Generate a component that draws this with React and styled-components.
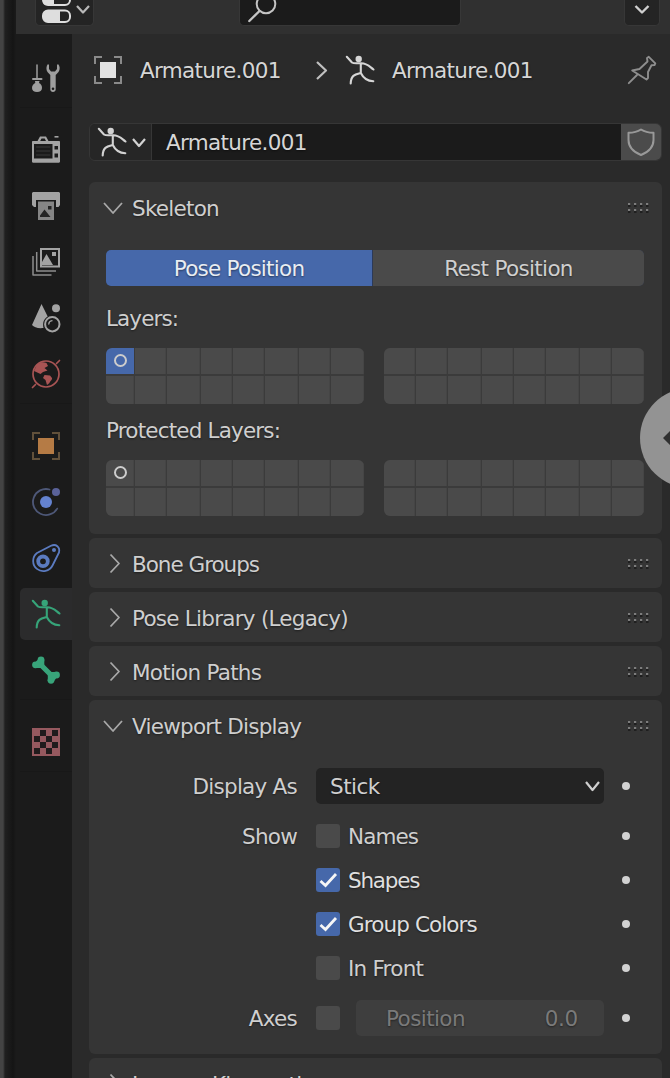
import React from "react";
import styled, { createGlobalStyle } from "styled-components";

const GlobalStyle = createGlobalStyle`
  *, *::before, *::after { box-sizing: border-box; }
  html, body { margin: 0; height: 100%; overflow: hidden; background: #2a2a2a; }
  #root { height: 100%; }
`;

const Editor = styled.div`
  position: relative;
  display: flex;
  width: 670px;
  height: 1078px;
  overflow: hidden;
  background: #2a2a2a;
  color: #cfcfcf;
  font-family: "DejaVu Sans", "Liberation Sans", sans-serif;
  font-size: 21.5px;
  letter-spacing: -0.75px;
  line-height: 26px;
  text-shadow: 0 1px 2px rgba(0, 0, 0, 0.45);
  white-space: nowrap;
`;

const AreaEdge = styled.div`
  flex: 0 0 16px;
  background: linear-gradient(90deg, #444444 0 3px, #202020 5px, #151515 13px, #1b1b1b 16px);
`;

const Area = styled.div`
  flex: 1;
  min-width: 0;
  display: flex;
  flex-direction: column;
`;

const Header = styled.header`
  flex: 0 0 34px;
  display: flex;
  align-items: flex-start;
  padding: 0 10px 0 19px;
  background: #303030;
`;

const HeaderButton = styled.button`
  display: flex;
  align-items: flex-start;
  justify-content: center;
  width: ${(p) => p.$width}px;
  height: 26px;
  margin: 0;
  padding: 0;
  border: 1px solid #373737;
  border-top: 0;
  border-radius: 0 0 5px 5px;
  background: #242424;
`;

const SearchField = styled.div`
  width: 222px;
  height: 26px;
  margin: 0 163px 0 145px;
  padding-left: 8px;
  border: 1px solid #373737;
  border-top: 0;
  border-radius: 0 0 5px 5px;
  background: #1b1b1b;
`;

const Body = styled.div`
  flex: 1;
  min-height: 0;
  display: flex;
`;

const TabBar = styled.nav`
  flex: 0 0 56px;
  display: flex;
  flex-direction: column;
  gap: 14px;
  padding: 16px 0 0 4px;
  background: #1b1b1b;
`;

const TabGroup = styled.div`
  padding-bottom: 1px;
  border-bottom: 1px solid #181818;
`;

const Tab = styled.div`
  display: flex;
  align-items: center;
  height: 52px;
  margin: 2px 0;
  & + & { margin-top: 4px; }
  padding-left: 12px;
  border-radius: 5px 0 0 5px;
  background: ${(p) => (p.$active ? "#2b2b2c" : "transparent")};
  color: ${(p) => p.$color};
`;

const Icon = styled.svg`
  display: block;
  flex: none;
  overflow: visible;
  fill: none;
  stroke: currentColor;
  stroke-width: ${(p) => p.$stroke ?? 2};
  stroke-linecap: round;
  stroke-linejoin: round;
`;

const Content = styled.main`
  flex: 1;
  min-width: 0;
  padding: 0 8px 0 17px;
`;

const Breadcrumb = styled.div`
  display: flex;
  align-items: center;
  height: 72px;
  padding: 0 6px 0 5px;
`;

const Text = styled.span`
  padding-top: 2px;
  letter-spacing: ${(p) => p.$tracking ?? -0.75}px;
`;

const Crumb = styled.div`
  display: flex;
  align-items: center;
  gap: 18px;
  width: ${(p) => p.$width}px;
  color: #d6d6d6;
`;

const CrumbArrow = styled.div`
  width: 30px;
  color: #c0c0c0;
`;

const PinSlot = styled.div`
  margin-left: auto;
  color: #8e8e8e;
`;

const DataBlock = styled.div`
  display: flex;
  height: 38px;
  margin: 17px 0 21px;
  border: 1px solid #363636;
  border-radius: 6px;
  overflow: hidden;
`;

const DataType = styled.div`
  display: flex;
  align-items: center;
  gap: 6px;
  width: 62px;
  padding-left: 8px;
  border-right: 1px solid #363636;
  background: #262626;
  color: #d2d2d2;
`;

const DataName = styled.div`
  flex: 1;
  display: flex;
  align-items: center;
  padding-left: 14px;
  background: #1b1b1b;
  color: #d6d6d6;
`;

const FakeUser = styled.div`
  display: flex;
  align-items: center;
  justify-content: center;
  width: 40px;
  background: #4b4b4b;
  color: #999999;
`;

const PanelStack = styled.div`
  display: flex;
  flex-direction: column;
  gap: 4px;
`;

const Panel = styled.section`
  height: ${(p) => p.$height}px;
  border-radius: 6px;
  background: #353535;
`;

const PanelHeader = styled.div`
  display: flex;
  align-items: center;
  height: 50px;
  padding: 2px 11.500px 0 14px;
`;

const PanelArrow = styled.div`
  display: flex;
  width: 29px;
  color: #a8a8a8;
`;

const PanelTitle = styled.h2`
  flex: 1;
  display: flex;
  margin: 0;
  font-size: inherit;
  font-weight: 400;
`;

const SkeletonBody = styled.div`
  padding: 18px 18px 0 17px;
`;

const Segmented = styled.div`
  display: grid;
  grid-template-columns: 266px 271px;
  gap: 1px;
  height: 36px;
  border-radius: 5px;
  overflow: hidden;
  background: #2c3a59;
`;

const Segment = styled.div`
  display: flex;
  align-items: center;
  justify-content: center;
  background: ${(p) => (p.$active ? "#4668aa" : "#4a4a4a")};
  color: ${(p) => (p.$active ? "#e9edf2" : "#cfcfcf")};
`;

const LayersLabel = styled.div`
  height: 26px;
  margin: ${(p) => p.$top}px 0 16px;
`;

const LayerBlocks = styled.div`
  display: flex;
  gap: 20px;
`;

const LayerGrid = styled.div`
  display: grid;
  grid-template-columns: ${(p) => p.$columns};
  grid-template-rows: 26px 28px;
  gap: 2px 1px;
  height: 56px;
  border-radius: 6px;
  overflow: hidden;
  background: #3b3b3b;
`;

const LayerCell = styled.div`
  display: flex;
  justify-content: center;
  padding-top: 6px;
  border-right: 1px solid ${(p) => (p.$active ? "#4668aa" : "#454545")};
  background: ${(p) => (p.$active ? "#4668aa" : "#4a4a4a")};
`;

const LayerRing = styled.span`
  width: 13px;
  height: 13px;
  margin-left: 1px;
  border: 2.500px solid #cccccc;
  border-radius: 50%;
`;

const DisplayBody = styled.div`
  display: flex;
  flex-direction: column;
  padding-top: 18px;
`;

const PropertyRow = styled.div`
  display: flex;
  align-items: center;
  height: ${(p) => p.$height}px;
`;

const PropertyLabel = styled.div`
  display: flex;
  justify-content: flex-end;
  width: 208px;
  margin-right: 19px;
`;

const PropertyValue = styled.div`
  display: flex;
  align-items: center;
  width: 288px;
`;

const Select = styled.div`
  flex: 1;
  display: flex;
  align-items: center;
  justify-content: space-between;
  height: 36px;
  padding: 0 4px 0 14px;
  border-radius: 5px;
  background: #232323;
`;

const Checkbox = styled.span`
  display: flex;
  align-items: center;
  justify-content: center;
  width: 24px;
  height: 24px;
  margin-right: ${(p) => p.$gap ?? 8}px;
  border-radius: 3px;
  background: ${(p) => (p.$checked ? "#4668aa" : "#4a4a4a")};
  color: #f6f6f6;
`;

const CheckLabel = styled(Text)`
  color: ${(p) => (p.$checked ? "#dfdfdf" : "#cfcfcf")};
`;

const NumberField = styled.div`
  flex: 1;
  display: flex;
  align-items: center;
  justify-content: space-between;
  height: 36px;
  padding: 0 26px 0 30px;
  border-radius: 5px;
  background: #3e3e3e;
  color: #7a7a7a;
`;

const AnimateDot = styled.span`
  width: 8px;
  height: 8px;
  margin-left: 18px;
  border-radius: 50%;
  background: #d2d2d2;
`;

const PreviousButton = styled.div`
  position: absolute;
  left: 640px;
  top: 388px;
  display: flex;
  align-items: center;
  width: 100px;
  height: 100px;
  padding-left: 23px;
  border-radius: 50%;
  background: #939393;
  color: #303030;
`;

const Chevron = ({ dir = "down", w = 14, h = 8, stroke = 2.2 }) => (
  <Icon width={w} height={h} viewBox={`0 0 ${w} ${h}`} $stroke={stroke}>
    <path
      strokeLinecap="butt"
      d={
        dir === "down"
          ? `M1 1 L${w / 2} ${h - 1} L${w - 1} 1`
          : `M1 1 L${w - 1} ${h / 2} L1 ${h - 1}`
      }
    />
  </Icon>
);

const Glyph = ({ children, stroke }) => (
  <Icon width="28" height="28" viewBox="0 0 28 28" $stroke={stroke}>
    {children}
  </Icon>
);

const ToolIcon = () => (
  <Glyph>
    <path d="M5 1V14" strokeWidth="1.5" />
    <path d="M1 15H9.5" strokeWidth="2" />
    <path d="M3 17H7.5L7 19C9 20 10 21.500 10 24C10 26.500 8 28 5 28C2 28 0 26.500 0 24C0 21.500 1.500 20 3.300 19Z" fill="currentColor" stroke="none" />
    <path d="M16 0C14 2 14 6 15.500 8L18.300 11V25.500C18.300 27 19.500 28 21 28C22.500 28 23.700 27 23.700 25.500V11L26.500 8C28.300 5.500 28 2 26 0L25 1V5L23 7.500H19L17 5V1Z M21 23.500A1.300 1.300 0 1 0 21 26.100A1.300 1.300 0 1 0 21 23.500Z" fill="currentColor" fillRule="evenodd" stroke="none" />
  </Glyph>
);

const RenderIcon = () => (
  <Glyph>
    <path fill="currentColor" fillRule="evenodd" stroke="none" d="M1 5H5.500L8 .5H14L16.500 5H27C27.700 5 28 5.500 28 6V25.500C28 26.200 27.500 26.700 27 26.700H1C.4 26.700 0 26.200 0 25.500V6C0 5.400.4 5 1 5ZM9.500 2.500L8.200 5H14L12.700 2.500ZM2 8V22.500H20.500V8ZM22.500 10V13.500H26V10ZM22.500 17.500V21.500H26V17.500Z" />
    <path strokeWidth="1" stroke="#3b3b3b" d="M4.500 11H18M4.500 15H18M4.500 19H18" />
    <path strokeWidth="1.600" strokeLinecap="butt" d="M22.500 .8H26.500" />
  </Glyph>
);

const OutputIcon = () => (
  <Glyph>
    <path fill="currentColor" stroke="none" d="M1 0H27L28 1V13L26.500 15H24V8H4V15H2L0 13V1Z" />
    <path fill="#858585" stroke="none" d="M6 9.500H22V28H6Z" />
    <path fill="#242424" stroke="none" d="M8 25V23.500L12.500 17.500L18.500 25ZM16 14H19.500V17.500H16Z" />
  </Glyph>
);

const ViewLayerIcon = () => (
  <Glyph>
    <path strokeLinejoin="miter" d="M9 1H27V18.500H9Z" />
    <path strokeLinecap="butt" strokeWidth="1.500" stroke="#8d8d8d" d="M4.700 4V23H24M1 8V27H19.500" />
    <path fill="currentColor" stroke="none" d="M10 17V14L14.500 6L21 17ZM20 4H24V8H20Z" />
  </Glyph>
);

const SceneIcon = () => (
  <Glyph>
    <path fill="currentColor" stroke="none" d="M9.500 0L15.700 12.500C11.500 15 10.500 19 11.500 24C6 24.500 2 23.500 0 21Z" />
    <circle cx="24" cy="4.200" r="4" fill="currentColor" stroke="none" />
    <circle cx="20.300" cy="20.200" r="7.200" />
    <path strokeWidth="1.300" d="M16.800 20A3.600 3.600 0 0 1 20 16.700" />
  </Glyph>
);

const WorldIcon = () => (
  <Glyph>
    <circle cx="14" cy="14" r="13" strokeWidth="1.700" />
    <path strokeWidth="1.700" d="M.5 27.500L3.500 24.500M24.500 3.500L27.500 .5" />
    <path fill="currentColor" stroke="none" d="M5 4.500C9 1.500 12 2 14.500 3L16 6L12.500 8L15.500 10.500L11 12L8.500 14L2 11ZM12.500 15L18 15.500L20 18C20.500 20 18 21 17.500 23L15 25L13.500 20L11 18Z" />
  </Glyph>
);

const ObjectIcon = ({ corner, fill }) => (
  <Glyph>
    <path stroke={corner} strokeWidth="2" strokeLinecap="butt" strokeLinejoin="miter" d="M1 8V1H8M20 1H27V8M27 20V27H20M8 27H1V20" />
    <path fill={fill} stroke="none" d="M6 6H22V22H6Z" />
  </Glyph>
);

const PhysicsIcon = () => (
  <Glyph>
    <circle cx="14" cy="14" r="6" fill="currentColor" stroke="none" />
    <circle cx="24" cy="4" r="4" fill="#5a6299" stroke="none" />
    <path stroke="#4e5878" strokeWidth="1.800" d="M17.500 1.500A13 13 0 1 0 25.200 20.600" />
  </Glyph>
);

const ConstraintIcon = () => (
  <Glyph>
    <path strokeWidth="1.800" d="M5 9L19 1.700C24 -.5 28.300 3 27 8.500L20.500 21.500A10.200 10.200 0 1 1 5 9Z" />
    <circle cx="11" cy="17.300" r="4.800" strokeWidth="3.800" />
    <circle cx="22" cy="6" r="2" fill="currentColor" stroke="none" />
  </Glyph>
);

const ArmatureIcon = () => (
  <Glyph stroke={2.1}>
    <circle cx="12.700" cy="3" r="3.200" fill="currentColor" stroke="none" />
    <path d="M.8.8L6 6.500C8 8 12 7 15 7.200C21 7 23.500 10.500 27.500 13.500M14.800 7.500V17M4.700 27.500C5 19 9 18.500 14.800 17C17.500 22.500 21.500 25 27.300 25.300" />
  </Glyph>
);

const BoneIcon = () => (
  <Glyph>
    <path strokeWidth="5.200" d="M8.500 8.500L19.500 19.500" />
    <g fill="currentColor" stroke="none">
      <circle cx="9" cy="3.800" r="3.400" />
      <circle cx="3.500" cy="8.800" r="3.400" />
      <circle cx="19" cy="24.300" r="3.400" />
      <circle cx="24.500" cy="19" r="3.400" />
      <path d="M6 3.500H12.300V12H4V5.500ZM15.800 16H24V22.500L22 25H15.800Z" />
    </g>
  </Glyph>
);

const TextureIcon = () => (
  <Glyph>
    <path fill="currentColor" stroke="none" d="M0 0H28V28H0Z" />
    <path fill="#211b1c" stroke="none" d="M8 2H14V8H8ZM20 2H26V8H20ZM2 8H8V14H2ZM14 8H20V14H14ZM8 14H14V20H8ZM20 14H26V20H20ZM2 20H8V26H2ZM14 20H20V26H14Z" />
  </Glyph>
);

const PinIcon = () => (
  <Glyph stroke={1.9}>
    <path d="M.8 27.200L9 19M4.200 14.500L11.500 13L19.500 5.500L19 2L20.800.8L27.300 7.300L26.500 9L23.500 9.300L20 16V22L18.500 23.500Z" />
  </Glyph>
);

const ShieldIcon = () => (
  <Glyph stroke={2}>
    <path d="M14 1.500C10.500 3.800 6 4.800 1.500 4.800V12C1.500 19 6.500 24 14 27C21.500 24 26.500 19 26.500 12V4.800C22 4.800 17.500 3.800 14 1.500Z" />
  </Glyph>
);

const EditorTypeIcon = () => (
  <Icon width="46" height="25" viewBox="0 0 46 25">
    <g stroke="#dedede">
      <rect x="1" y="-6.500" width="27" height="11.500" rx="5" />
      <rect x="1" y="10.500" width="27" height="11.500" rx="5" />
    </g>
    <path fill="#dedede" stroke="none" d="M5 -6H12V5H5C2 5 1 4 1 0ZM6 10.500H18V22H6C3 22 1 20 1 16.200C1 12.500 3 10.500 6 10.500Z" />
    <path stroke="#b8b8b8" strokeWidth="2.200" strokeLinecap="butt" d="M35 6L41 12.500L47 6" />
  </Icon>
);

const SearchIcon = () => (
  <Icon width="30" height="25" viewBox="0 0 30 25">
    <circle cx="18" cy="4" r="9.300" stroke="#c4c4c4" />
    <path stroke="#c4c4c4" strokeWidth="2.400" d="M11.500 11L1.300 21" />
  </Icon>
);

const GripIcon = () => (
  <Icon width="24" height="12" viewBox="0 0 24 12">
    {[0, 1, 2, 3].map((c) =>
      [0, 1].map((r) => (
        <g key={`${c}-${r}`} stroke="none">
          <rect x={1 + c * 6} y={3 + r * 6} width="2.500" height="2" fill="#1f1f1f" />
          <rect x={1 + c * 6} y={1 + r * 6} width="2.200" height="2" fill="#7d7d7d" />
        </g>
      ))
    )}
  </Icon>
);

const tabGroups = [
  [{ name: "tool", icon: <ToolIcon />, color: "#9f9f9f" }],
  [
    { name: "render", icon: <RenderIcon />, color: "#a3a3a3" },
    { name: "output", icon: <OutputIcon />, color: "#a3a3a3" },
    { name: "viewlayer", icon: <ViewLayerIcon />, color: "#a3a3a3" },
    { name: "scene", icon: <SceneIcon />, color: "#a3a3a3" },
    { name: "world", icon: <WorldIcon />, color: "#a85454" },
  ],
  [
    { name: "object", icon: <ObjectIcon corner="#62513b" fill="#b57b45" />, color: "#b57b45" },
    { name: "physics", icon: <PhysicsIcon />, color: "#6482cf" },
    { name: "constraints", icon: <ConstraintIcon />, color: "#5b7bc0" },
    { name: "data", icon: <ArmatureIcon />, color: "#36a479", active: true },
    { name: "bone", icon: <BoneIcon />, color: "#38a47a" },
  ],
  [{ name: "texture", icon: <TextureIcon />, color: "#96595f" }],
];

const LEFT_COLUMNS = "28px 31px 33px 31px 31px 33px 31px 33px";
const RIGHT_COLUMNS = "31px 31px 33px 31px 31px 33px 31px 32px";

function Layers({ active }) {
  return (
    <LayerBlocks>
      {[LEFT_COLUMNS, RIGHT_COLUMNS].map((columns, block) => (
        <LayerGrid key={columns} $columns={columns}>
          {Array.from({ length: 16 }, (_, i) => (
            <LayerCell key={i} $active={active && block === 0 && i === 0}>
              {block === 0 && i === 0 && <LayerRing />}
            </LayerCell>
          ))}
        </LayerGrid>
      ))}
    </LayerBlocks>
  );
}

function PropertiesPanel({ title, tracking, open, height = 50, children }) {
  return (
    <Panel $height={height}>
      <PanelHeader>
        <PanelArrow>
          {open ? (
            <Chevron w={20} h={12} stroke={1.8} />
          ) : (
            <Icon width="20" height="20" viewBox="0 0 20 20" $stroke={1.8}>
              <path d="M7.500 .5L16 9.500L7.500 18.500" strokeLinecap="butt" />
            </Icon>
          )}
        </PanelArrow>
        <PanelTitle>
          <Text $tracking={tracking}>{title}</Text>
        </PanelTitle>
        <GripIcon />
      </PanelHeader>
      {children}
    </Panel>
  );
}

function CheckRow({ label, text, tracking, checked, height = 44 }) {
  return (
    <PropertyRow $height={height}>
      <PropertyLabel>
        <Text>{label}</Text>
      </PropertyLabel>
      <PropertyValue>
        <Checkbox $checked={checked}>
          {checked && (
            <Icon width="18" height="16" viewBox="0 0 18 16" $stroke={2.8}>
              <path d="M1.500 9L6.500 13.500L17 2" strokeLinecap="butt" strokeLinejoin="miter" />
            </Icon>
          )}
        </Checkbox>
        <CheckLabel $checked={checked} $tracking={tracking}>
          {text}
        </CheckLabel>
      </PropertyValue>
      <AnimateDot />
    </PropertyRow>
  );
}

export default function App() {
  return (
    <>
      <GlobalStyle />
      <Editor>
        <AreaEdge />
        <Area>
          <Header>
            <HeaderButton $width={59}>
              <EditorTypeIcon />
            </HeaderButton>
            <SearchField>
              <SearchIcon />
            </SearchField>
            <HeaderButton $width={36}>
              <Icon width="14" height="16" viewBox="0 0 14 16" $stroke={2.4} color="#d0d0d0">
                <path d="M.5 6L7 12.500L13.500 6" strokeLinecap="butt" />
              </Icon>
            </HeaderButton>
          </Header>
          <Body>
            <TabBar>
              {tabGroups.map((group) => (
                <TabGroup key={group[0].name}>
                  {group.map((tab) => (
                    <Tab key={tab.name} $active={tab.active} $color={tab.color}>
                      {tab.icon}
                    </Tab>
                  ))}
                </TabGroup>
              ))}
            </TabBar>
            <Content>
              <Breadcrumb>
                <Crumb $width={222}>
                  <ObjectIcon corner="#8a8a8a" fill="#e2e2e2" />
                  <Text $tracking={-0.67}>Armature.001</Text>
                </Crumb>
                <CrumbArrow>
                  <Chevron dir="right" w={11} h={19} />
                </CrumbArrow>
                <Crumb $width={200}>
                  <ArmatureIcon />
                  <Text $tracking={-0.67}>Armature.001</Text>
                </Crumb>
                <PinSlot>
                  <PinIcon />
                </PinSlot>
              </Breadcrumb>
              <DataBlock>
                <DataType>
                  <ArmatureIcon />
                  <Chevron w={14} h={9} />
                </DataType>
                <DataName>
                  <Text $tracking={-0.67}>Armature.001</Text>
                </DataName>
                <FakeUser>
                  <ShieldIcon />
                </FakeUser>
              </DataBlock>
              <PanelStack>
                <PropertiesPanel title="Skeleton" open height={352}>
                  <SkeletonBody>
                    <Segmented>
                      <Segment $active>
                        <Text>Pose Position</Text>
                      </Segment>
                      <Segment>
                        <Text $tracking={-0.67}>Rest Position</Text>
                      </Segment>
                    </Segmented>
                    <LayersLabel $top={20}>
                      <Text $tracking={-0.9}>Layers:</Text>
                    </LayersLabel>
                    <Layers active />
                    <LayersLabel $top={14}>
                      <Text $tracking={-0.82}>Protected Layers:</Text>
                    </LayersLabel>
                    <Layers />
                  </SkeletonBody>
                </PropertiesPanel>
                <PropertiesPanel title="Bone Groups" tracking={-1.02} />
                <PropertiesPanel title="Pose Library (Legacy)" />
                <PropertiesPanel title="Motion Paths" />
                <PropertiesPanel title="Viewport Display" open height={354}>
                  <DisplayBody>
                    <PropertyRow $height={36}>
                      <PropertyLabel>
                        <Text>Display As</Text>
                      </PropertyLabel>
                      <PropertyValue>
                        <Select>
                          <Text $tracking={-0.5}>Stick</Text>
                          <Chevron w={15} h={10} />
                        </Select>
                      </PropertyValue>
                      <AnimateDot />
                    </PropertyRow>
                    <CheckRow label="Show" text="Names" tracking={-0.9} height={64} />
                    <CheckRow text="Shapes" tracking={-1.2} checked height={24} />
                    <CheckRow text="Group Colors" tracking={-0.9} checked height={64} />
                    <CheckRow text="In Front" height={24} />
                    <PropertyRow $height={76}>
                      <PropertyLabel>
                        <Text>Axes</Text>
                      </PropertyLabel>
                      <PropertyValue>
                        <Checkbox $gap={16} />
                        <NumberField>
                          <Text $tracking={-0.6}>Position</Text>
                          <Text $tracking={-0.3}>0.0</Text>
                        </NumberField>
                      </PropertyValue>
                      <AnimateDot />
                    </PropertyRow>
                  </DisplayBody>
                </PropertiesPanel>
                <PropertiesPanel title="Inverse Kinematics" />
              </PanelStack>
            </Content>
          </Body>
          <PreviousButton>
            <Icon width="30" height="32" viewBox="0 0 30 32">
              <path fill="currentColor" stroke="none" d="M0 16L15 1L19 5L11 13H29V19H11L19 27L15 31Z" />
            </Icon>
          </PreviousButton>
        </Area>
      </Editor>
    </>
  );
}
